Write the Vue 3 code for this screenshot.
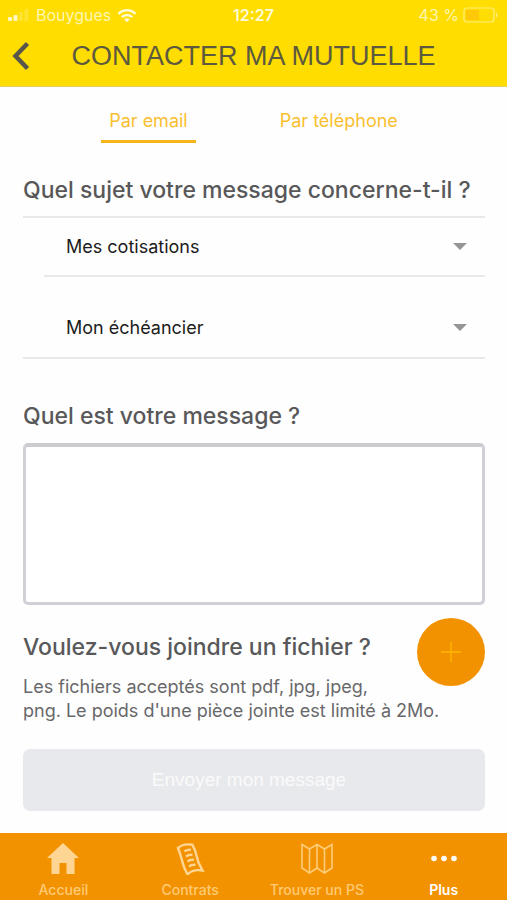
<template>
  <div class="app">
    <header class="header">
      <div class="status">
        <div class="status-side">
          <svg width="22" height="12" viewBox="0 0 22 12" fill="#fff8c4">
            <rect x="0" y="8" width="4" height="4" rx="1" />
            <rect x="5.500" y="6" width="4" height="6" rx="1" />
            <rect x="11" y="3" width="4" height="9" rx="1" opacity="0.25" />
            <rect x="16.500" y="0" width="4" height="12" rx="1" opacity="0.25" />
          </svg>
          <span class="carrier">Bouygues</span>
          <svg width="20" height="15" viewBox="0 0 20 15" fill="none" stroke="#fffad6" stroke-width="2.600">
            <path d="M1.500 5.800a12 12 0 0 1 17 0" />
            <path d="M4.800 9.200a7.400 7.400 0 0 1 10.400 0" />
            <path d="M10 14.200L7.200 11.500a4 4 0 0 1 5.600 0z" fill="#fffad6" stroke="none" />
          </svg>
        </div>
        <span class="clock">12:27</span>
        <div class="status-side right">
          <span>43 %</span>
          <svg width="36" height="16" viewBox="0 0 36 16">
            <rect x="1" y="1" width="30" height="14" rx="3" fill="none" stroke="#ffee80" stroke-width="1.200" />
            <rect x="3" y="3" width="13" height="10" rx="1" fill="#ffc90a" />
            <path d="M33 5.500c2 .6 2 4.400 0 5z" fill="#ffee80" />
          </svg>
        </div>
      </div>
      <div class="title-bar">
        <button class="back" type="button" aria-label="Retour">
          <svg width="18" height="30" viewBox="0 0 18 30" fill="none" stroke="#58564a" stroke-width="4.500">
            <path d="M15.500 2.500L3.500 15l12 12.500" />
          </svg>
        </button>
        <h1>CONTACTER MA MUTUELLE</h1>
      </div>
    </header>

    <nav class="tabs">
      <button
        v-for="tab in tabs"
        :key="tab.id"
        type="button"
        class="tab"
        :class="{ active: tab.id === activeTab }"
        @click="activeTab = tab.id"
      >
        {{ tab.label }}
      </button>
    </nav>

    <form class="form" @submit.prevent>
      <label class="heading" for="subject">Quel sujet votre message concerne-t-il ?</label>
      <div class="selects">
        <div class="select-row inset">
          <select id="subject" v-model="subject">
            <option>Mes cotisations</option>
          </select>
          <svg class="caret" width="14" height="7" viewBox="0 0 14 7"><path d="M0 0h14L7 7z" fill="#959595" /></svg>
        </div>
        <div class="select-row">
          <select v-model="detail" aria-label="Détail du sujet">
            <option>Mon échéancier</option>
          </select>
          <svg class="caret" width="14" height="7" viewBox="0 0 14 7"><path d="M0 0h14L7 7z" fill="#959595" /></svg>
        </div>
      </div>

      <label class="heading" for="message">Quel est votre message ?</label>
      <textarea id="message" v-model="message" class="message"></textarea>

      <div class="attachment">
        <div class="attachment-text">
          <h2 class="heading">Voulez-vous joindre un fichier ?</h2>
          <p>Les fichiers acceptés sont pdf, jpg, jpeg,<br />png. Le poids d'une pièce jointe est limité à 2Mo.</p>
        </div>
        <button class="add" type="button" aria-label="Joindre un fichier">
          <svg width="20" height="20" viewBox="0 0 20 20" stroke="#ffb800" stroke-width="1.300">
            <path d="M10 0v20M0 10h20" />
          </svg>
        </button>
      </div>

      <button class="submit" type="submit" :disabled="!message">Envoyer mon message</button>
    </form>

    <nav class="bottom-nav">
      <a href="#" class="nav-item">
        <svg width="32" height="32" viewBox="0 0 32 32" fill="#ffd594">
          <path d="M16 0l16 15h-4.500v16h-8V20h-7v11h-8V15H0z" />
        </svg>
        Accueil
      </a>
      <a href="#" class="nav-item">
        <svg width="32" height="32" viewBox="0 0 32 32" fill="none" stroke="#ffd594" stroke-width="2.400">
          <path d="M4 5C8 1.500 13 .800 18.500 1.800l2.500 5.700 3.500 12 4 8c-6-1-11-.500-15 4L10 24 6 10.500z" />
          <path d="M10.500 8.500c2-1.500 4-2 6.500-1.500M12 13.500c2-1.500 4-2 6.500-1.500M13.500 18.500c2-1.500 4-2 6.500-1.500M15 23.500c2-1.500 4-2 6.500-1.500" />
        </svg>
        Contrats
      </a>
      <a href="#" class="nav-item">
        <svg width="32" height="32" viewBox="0 0 32 32" fill="none" stroke="#ffcc78" stroke-width="1.600">
          <path d="M1 1.500L8.500 6 16 1.500 23.500 6 31 1.500v23.500L23.500 30 16 25 8.500 30 1 25z" />
          <path d="M8.500 6v24M16 1.500V25M23.500 6v24" />
        </svg>
        Trouver un PS
      </a>
      <a href="#" class="nav-item current">
        <svg width="32" height="32" viewBox="0 0 32 32" fill="#fff">
          <circle cx="6" cy="15.500" r="2.800" />
          <circle cx="16" cy="15.500" r="2.800" />
          <circle cx="26" cy="15.500" r="2.800" />
        </svg>
        Plus
      </a>
    </nav>
  </div>
</template>

<script setup>
import { ref } from 'vue'

const tabs = [
  { id: 'email', label: 'Par email' },
  { id: 'phone', label: 'Par téléphone' }
]

const activeTab = ref('email')
const subject = ref('Mes cotisations')
const detail = ref('Mon échéancier')
const message = ref('')
</script>

<style>
body {
  margin: 0;
  background: #fefefe;
}
</style>

<style scoped>
.app {
  min-height: 100vh;
  display: flex;
  flex-direction: column;
  font-family: Inter, 'Liberation Sans', sans-serif;
  color: #555;
}

.app * {
  box-sizing: border-box;
}

button {
  font-family: inherit;
  border: none;
  background: none;
  padding: 0;
  cursor: pointer;
}

.header {
  background: #ffdd00;
  border-bottom: 1px solid #e3cf55;
}

.status {
  display: flex;
  align-items: center;
  height: 30px;
  padding: 0 8px;
  font-size: 16px;
  color: #fff6b0;
}

.status-side {
  flex: 1;
  display: flex;
  align-items: center;
  gap: 6px;
}

.status-side.right {
  justify-content: flex-end;
  gap: 4px;
}

.clock {
  font-weight: 600;
  color: #fffad6;
}

.title-bar {
  display: flex;
  align-items: center;
  height: 56px;
  padding: 0 12px 4px;
}

.back {
  display: flex;
  width: 18px;
}

h1 {
  flex: 1;
  margin: 0;
  padding-right: 18px;
  text-align: center;
  font-family: 'Liberation Sans', sans-serif;
  font-size: 27px;
  font-weight: 400;
  line-height: 32px;
  color: #5c593f;
}

.tabs {
  display: flex;
  justify-content: center;
  gap: 76px;
  padding: 18px 0 0;
}

.tab {
  padding: 0 8px 3px;
  font-size: 18px;
  line-height: 32px;
  color: #f9bf30;
  border-bottom: 3px solid transparent;
}

.tab.active {
  border-bottom-color: #f7b51c;
}

.form {
  flex: 1;
  display: flex;
  flex-direction: column;
  padding: 31px 22px 22px 23px;
}

.heading {
  margin: 0;
  font-size: 23px;
  font-weight: 500;
  line-height: 32px;
  color: #58585a;
}

.selects {
  margin-top: 10px;
  margin-bottom: 41px;
  border-top: 2px solid #e8e8e8;
  border-bottom: 2px solid #e8e8e8;
}

.select-row {
  display: flex;
  align-items: center;
  height: 59px;
  padding: 0 18px 0 43px;
}

.select-row.inset {
  margin-left: 21px;
  margin-bottom: 21px;
  padding-left: 22px;
  border-bottom: 2px solid #e8e8e8;
}

select {
  flex: 1;
  height: 100%;
  padding: 0;
  border: none;
  outline: none;
  appearance: none;
  background: transparent;
  font-family: inherit;
  font-size: 18px;
  color: #1c1c1c;
}

.caret {
  pointer-events: none;
}

.message {
  display: block;
  width: 100%;
  height: 162px;
  margin-top: 11px;
  padding: 12px;
  border: 3px solid #d0d1d7;
  border-top: 4px solid #cbccd0;
  border-radius: 5px;
  outline: none;
  resize: none;
  background: #fff;
  font-family: inherit;
  font-size: 18px;
}

.attachment {
  display: flex;
  justify-content: space-between;
  margin-top: 13px;
}

.attachment-text {
  flex: 1;
  padding-top: 13px;
}

.attachment p {
  margin: 12px 0 0;
  font-size: 18px;
  line-height: 24px;
  color: #68686a;
  white-space: nowrap;
}

.add {
  display: flex;
  align-items: center;
  justify-content: center;
  width: 68px;
  height: 68px;
  margin-left: -68px;
  border-radius: 50%;
  background: #f39200;
}

.submit {
  height: 62px;
  margin-top: 26px;
  padding-right: 10px;
  border-radius: 7px;
  background: #e8e9ec;
  font-family: 'Liberation Sans', sans-serif;
  font-size: 19px;
  color: #fafafa;
}

.bottom-nav {
  display: flex;
  height: 67px;
  padding-top: 10px;
  background: #f39200;
}

.nav-item {
  flex: 1;
  display: flex;
  flex-direction: column;
  align-items: center;
  gap: 6px;
  font-size: 14px;
  font-weight: 500;
  line-height: 18px;
  color: #ffca75;
  text-decoration: none;
}

.nav-item.current {
  font-weight: 600;
  color: #fff;
}
</style>
